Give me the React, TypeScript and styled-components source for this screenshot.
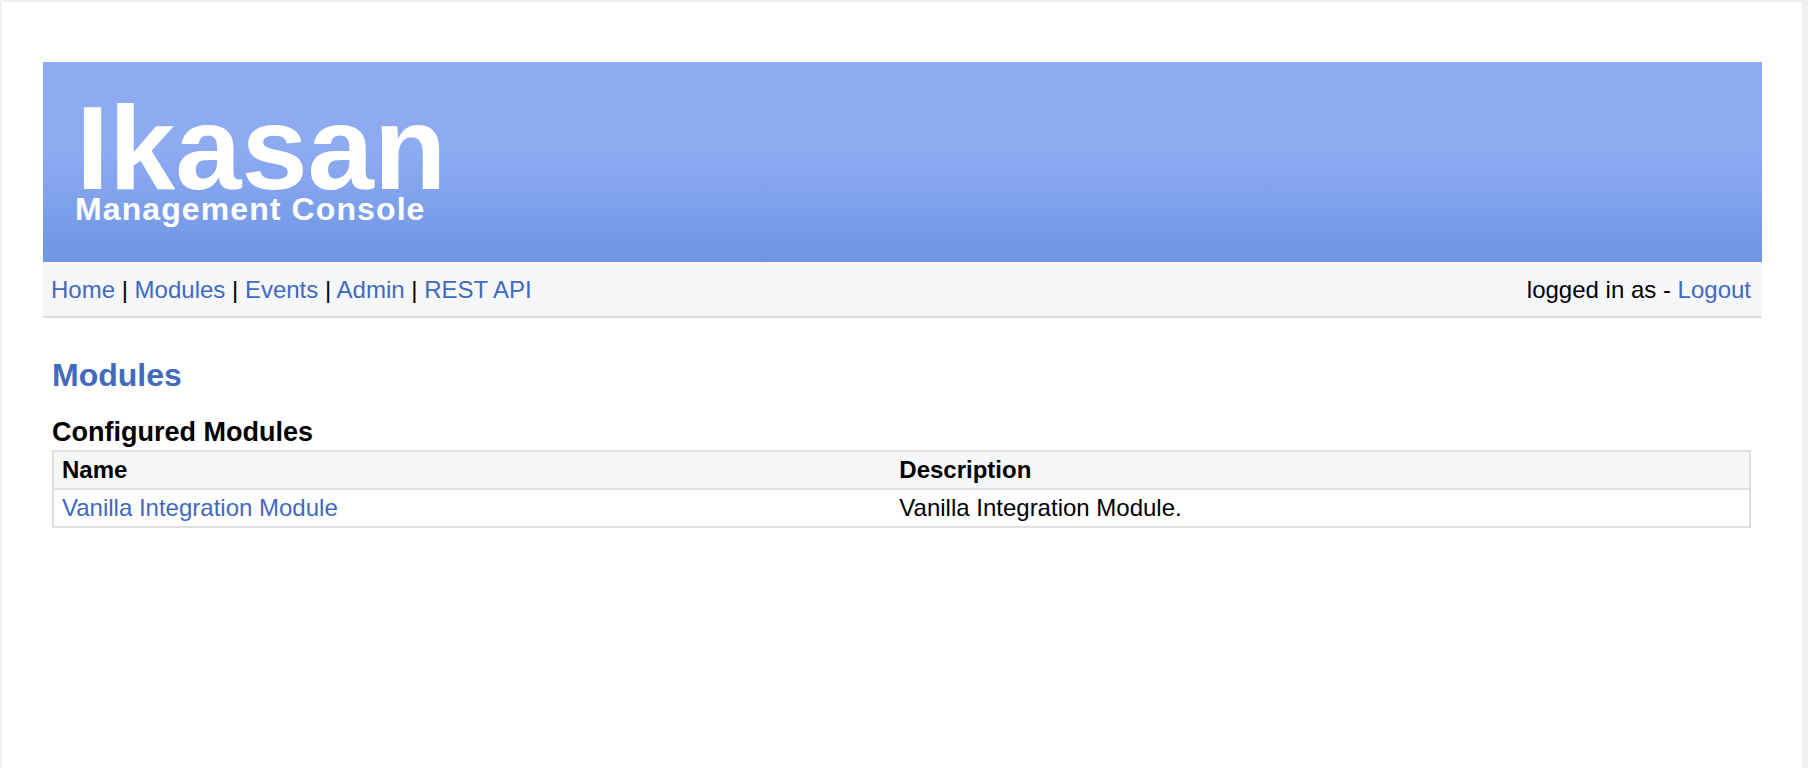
import React from "react";
import styled, { createGlobalStyle } from "styled-components";

const GlobalStyle = createGlobalStyle`
  html, body {
    margin: 0;
    padding: 0;
    background: #efefef;
  }
  body {
    font-family: "Liberation Sans", Arial, Helvetica, sans-serif;
    font-size: 24px;
    color: #000;
  }
`;

const Frame = styled.div`
  margin: 2px 6px 0 2px;
  min-height: calc(100vh - 2px);
  background: #ffffff;
  padding: 60px 40px 0 41px;
  box-sizing: border-box;
`;

const Banner = styled.header`
  height: 200px;
  box-sizing: border-box;
  padding: 35px 0 0 28px;
  background: linear-gradient(to bottom, #8eabf2 0%, #8eabf2 44%, #6e95e4 100%);
  color: #ffffff;
`;

const Logo = styled.div`
  font-size: 119px;
  font-weight: bold;
  line-height: 102px;
  padding-left: 5px;
`;

const Tagline = styled.div`
  font-size: 32px;
  font-weight: bold;
  letter-spacing: 1.1px;
  line-height: 20px;
  padding-left: 4px;
`;

const NavBar = styled.nav`
  height: 52px;
  display: flex;
  align-items: center;
  justify-content: space-between;
  padding: 2px 11px 0 8px;
  background: #f6f7f9;
  border-bottom: 2px solid #dedede;
`;

const NavGroup = styled.div`
  white-space: pre;
`;

const Link = styled.a`
  color: #4169c0;
  text-decoration: none;
  cursor: pointer;
`;

const Content = styled.main`
  padding: 39px 11px 0 9px;
`;

const PageTitle = styled.h2`
  margin: 0;
  font-size: 32px;
  font-weight: bold;
  color: #4169c0;
`;

const SectionTitle = styled.h3`
  margin: 23px 0 2px;
  font-size: 27px;
  font-weight: bold;
`;

const Table = styled.table`
  width: 100%;
  border-collapse: collapse;
  border: 2px solid #dfdfdf;
`;

const HeadCell = styled.th<{ $width?: string }>`
  width: ${(p) => p.$width ?? "auto"};
  text-align: left;
  font-weight: bold;
  padding: 4px 8px;
  background: #f6f7f9;
  border-bottom: 2px solid #dfdfdf;
`;

const Cell = styled.td`
  padding: 4px 8px;
  border-bottom: 2px solid #dfdfdf;
`;

const navItems = ["Home", "Modules", "Events", "Admin", "REST API"];

const modules = [
  { name: "Vanilla Integration Module", description: "Vanilla Integration Module." },
];

export default function App() {
  return (
    <>
      <GlobalStyle />
      <Frame>
        <Banner>
          <Logo>Ikasan</Logo>
          <Tagline>Management Console</Tagline>
        </Banner>
        <NavBar>
          <NavGroup>
            {navItems.map((item, i) => (
              <React.Fragment key={item}>
                {i > 0 && " | "}
                <Link>{item}</Link>
              </React.Fragment>
            ))}
          </NavGroup>
          <NavGroup>
            logged in as - <Link>Logout</Link>
          </NavGroup>
        </NavBar>
        <Content>
          <PageTitle>Modules</PageTitle>
          <SectionTitle>Configured Modules</SectionTitle>
          <Table>
            <thead>
              <tr>
                <HeadCell $width="49.4%">Name</HeadCell>
                <HeadCell>Description</HeadCell>
              </tr>
            </thead>
            <tbody>
              {modules.map((m) => (
                <tr key={m.name}>
                  <Cell>
                    <Link>{m.name}</Link>
                  </Cell>
                  <Cell>{m.description}</Cell>
                </tr>
              ))}
            </tbody>
          </Table>
        </Content>
      </Frame>
    </>
  );
}
